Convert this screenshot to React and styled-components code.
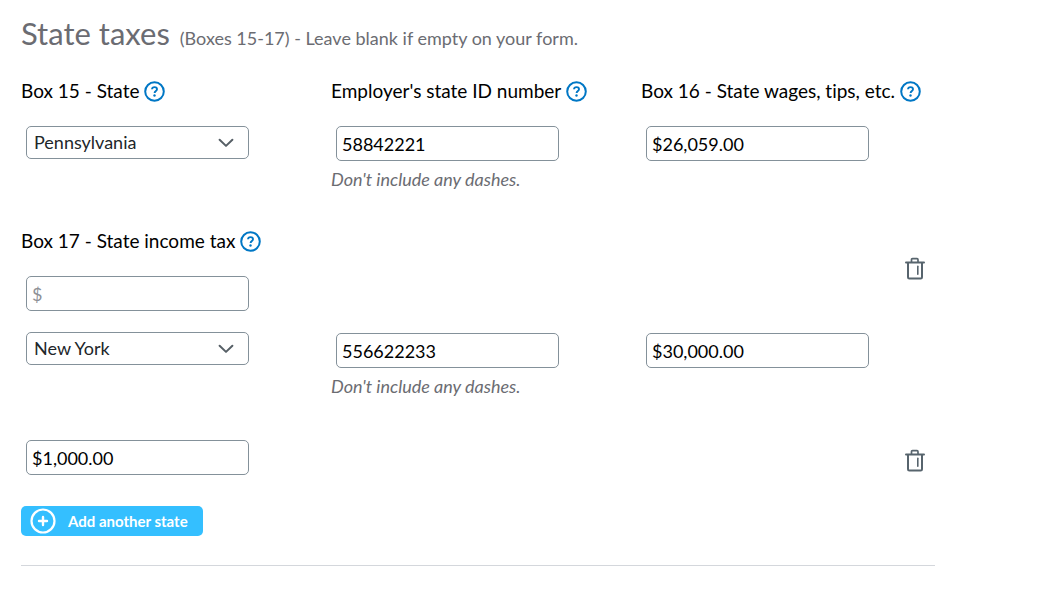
import React, { useState } from 'react';
import styled, { createGlobalStyle, css } from 'styled-components';

const GlobalStyle = createGlobalStyle`
* {
    margin: 0;
    padding: 0;
    box-sizing: border-box;
}

body {
    font-family: Lato, 'Open Sans', sans-serif;
    font-variant-ligatures: none;
    background: #fff;
    color: #000;
}

input, select, button {
    font-family: inherit;
}
`;

const controlStyles = css`
    display: block;
    width: 76%;
    border: 1px solid #84919a;
    border-radius: 5px;
    background-color: #fff;
    font-size: 18px;
`;

const Section = styled.form`
    margin: 0 119px 0 21px;
    padding: 15px 0 29px;
    border-bottom: 1px solid #d4d7dc;
`;

const Heading = styled.h2`
    margin-bottom: 22px;
    color: #6b6c72;
    font-size: 31px;
    font-weight: 400;
    line-height: 36px;

    small {
        margin-left: 2px;
        font-size: 18px;
    }
`;

const Entry = styled.div`
    margin-bottom: 21px;
`;

const Row = styled.div`
    display: grid;
    grid-template-columns: repeat(3, 1fr);
    gap: 16px;
`;

const TaxRow = styled(Row)`
    min-height: 40px;
    margin-top: 39px;
    align-items: ${({ $labelled }) => ($labelled ? 'center' : 'end')};
`;

const LabelLine = styled.div`
    display: flex;
    align-items: center;
    gap: 5px;
    height: 24px;
    margin-bottom: 24px;
    font-size: 19px;
    white-space: nowrap;
`;

const HelpButton = styled.button`
    display: flex;
    flex: none;
    padding-top: 3px;
    border: 0;
    background: none;
    cursor: pointer;
`;

const Input = styled.input`
    ${controlStyles}
    height: 35px;
    margin: 1px 5px 0;
    padding: 0 5px;

    &::placeholder {
        color: #8d9096;
        opacity: 1;
    }
`;

const SelectWrapper = styled.div`
    display: grid;
    align-items: center;

    select,
    svg {
        grid-area: 1 / 1;
    }

    svg {
        justify-self: start;
        margin-left: calc(76% - 26px);
        pointer-events: none;
    }
`;

const Select = styled.select`
    ${controlStyles}
    height: 33px;
    margin: 0 5px;
    padding: 0 32px 2px 7px;
    appearance: none;
    color: #21262a;
`;

const Hint = styled.p`
    margin-top: 8px;
    color: #6b6c72;
    font-size: 18px;
    font-style: italic;
    line-height: 20px;
`;

const TrashButton = styled.button`
    display: flex;
    grid-column: 3;
    justify-self: end;
    margin-right: 10px;
    padding-bottom: 2px;
    border: 0;
    background: none;
    cursor: pointer;
`;

const AddButton = styled.button`
    display: flex;
    align-items: center;
    gap: 12px;
    height: 30px;
    margin-top: 31px;
    padding: 0 15px 0 9px;
    border: 0;
    border-radius: 5px;
    background-color: #34bfff;
    color: #fff;
    font-size: 15px;
    font-weight: 700;
    cursor: pointer;
`;

const HelpIcon = () => (
    <svg width="21" height="21" viewBox="0 0 21 21" fill="none" aria-hidden="true">
        <circle cx="10.5" cy="10.5" r="9.3" stroke="#0077c5" strokeWidth="2" />
        <path
            d="M8 8.2C8.1 6.8 9.1 6.1 10.5 6.1c1.4 0 2.5.8 2.5 2.1 0 1.7-2.4 1.7-2.4 3.7"
            stroke="#0077c5"
            strokeWidth="1.9"
        />
        <circle cx="10.5" cy="14.5" r="1.2" fill="#0077c5" />
    </svg>
);

const ChevronIcon = () => (
    <svg width="16" height="10" viewBox="0 0 16 10" fill="none" aria-hidden="true">
        <path
            d="M1.6 1.8 8 7.9l6.4-6.1"
            stroke="#565f66"
            strokeWidth="2"
            strokeLinecap="round"
            strokeLinejoin="round"
        />
    </svg>
);

const TrashIcon = () => (
    <svg width="20" height="24" viewBox="0 0 20 24" fill="none" stroke="#57646d" aria-hidden="true">
        <path d="M1 5.5h18" strokeWidth="2" strokeLinecap="round" />
        <path d="M6.5 5V2.7q0-1 1-1h4.5q1 0 1 1V5" strokeWidth="1.7" />
        <path d="M3 5.5v14.7q0 1.3 1.3 1.3h11.4q1.3 0 1.3-1.3V5.5" strokeWidth="2" />
        <path d="M12.8 9.3v8" strokeWidth="1.6" strokeLinecap="round" />
    </svg>
);

const PlusIcon = () => (
    <svg width="26" height="26" viewBox="0 0 26 26" fill="none" stroke="#fff" aria-hidden="true">
        <circle cx="13" cy="13" r="11.5" strokeWidth="2.2" />
        <path d="M13 9v8M9 13h8" strokeWidth="2.4" strokeLinecap="round" />
    </svg>
);

const FieldLabel = ({ id, text }) => (
    <LabelLine>
        <label htmlFor={id}>{text}</label>
        <HelpButton type="button" aria-label={`Help for ${text}`}>
            <HelpIcon />
        </HelpButton>
    </LabelLine>
);

const labels = {
    state: 'Box 15 - State',
    employerId: "Employer's state ID number",
    wages: 'Box 16 - State wages, tips, etc.',
    tax: 'Box 17 - State income tax',
};

const initialEntries = [
    { state: 'Pennsylvania', employerId: '58842221', wages: '$26,059.00', tax: '' },
    { state: 'New York', employerId: '556622233', wages: '$30,000.00', tax: '$1,000.00' },
];

const StateEntry = ({ entry, index, onChange, onRemove }) => {
    // only the first entry shows its labels
    const labelled = index === 0;

    const field = (name) => ({
        id: `${name}-${index}`,
        name: `${name}-${index}`,
        value: entry[name],
        'aria-label': labelled ? undefined : labels[name],
        onChange: (e) => onChange(name, e.target.value),
    });

    const label = (name) =>
        labelled && <FieldLabel id={`${name}-${index}`} text={labels[name]} />;

    return (
        <Entry>
            <Row>
                <div>
                    {label('state')}
                    <SelectWrapper>
                        <Select {...field('state')}>
                            <option value=""></option>
                            <option>New York</option>
                            <option>Pennsylvania</option>
                        </Select>
                        <ChevronIcon />
                    </SelectWrapper>
                </div>
                <div>
                    {label('employerId')}
                    <Input
                        type="text"
                        aria-describedby={`hint-${index}`}
                        {...field('employerId')}
                    />
                    <Hint id={`hint-${index}`}>Don't include any dashes.</Hint>
                </div>
                <div>
                    {label('wages')}
                    <Input type="text" placeholder="$" {...field('wages')} />
                </div>
            </Row>
            <TaxRow $labelled={labelled}>
                <div>
                    {label('tax')}
                    <Input type="text" placeholder="$" {...field('tax')} />
                </div>
                <TrashButton type="button" aria-label="Delete state" onClick={onRemove}>
                    <TrashIcon />
                </TrashButton>
            </TaxRow>
        </Entry>
    );
};

const App = () => {
    const [entries, setEntries] = useState(initialEntries);

    const updateEntry = (index, name, value) =>
        setEntries(entries.map((e, i) => (i === index ? { ...e, [name]: value } : e)));

    const removeEntry = (index) => setEntries(entries.filter((_, i) => i !== index));

    const addEntry = () =>
        setEntries([...entries, { state: '', employerId: '', wages: '', tax: '' }]);

    return (
        <>
            <GlobalStyle />
            <Section>
                <Heading>
                    State taxes <small>(Boxes 15-17) - Leave blank if empty on your form.</small>
                </Heading>
                {entries.map((entry, i) => (
                    <StateEntry
                        key={i}
                        entry={entry}
                        index={i}
                        onChange={(name, value) => updateEntry(i, name, value)}
                        onRemove={() => removeEntry(i)}
                    />
                ))}
                <AddButton type="button" onClick={addEntry}>
                    <PlusIcon />
                    Add another state
                </AddButton>
            </Section>
        </>
    );
};

export default App;
